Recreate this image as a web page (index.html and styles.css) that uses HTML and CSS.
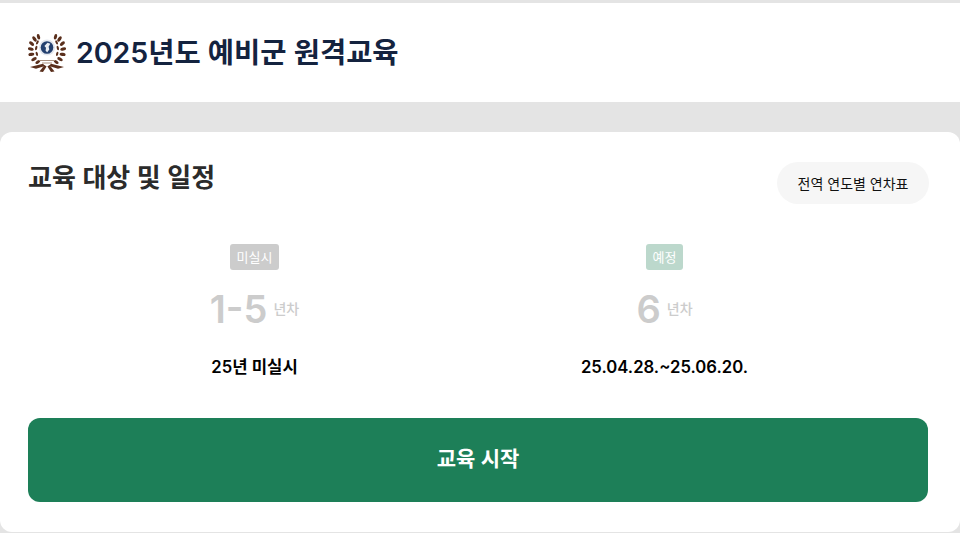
FILE: index.html
```html
<!DOCTYPE html>
<html lang="ko">
<head>
<meta charset="utf-8">
<title>2025년도 예비군 원격교육</title>
<link rel="stylesheet" href="styles.css">
</head>
<body>
<header class="top">
  <svg class="emblem" viewBox="0 0 38 38" aria-hidden="true">
    <g id="half" fill="#5a2f1c">
      <ellipse cx="10.5" cy="2.8" rx="1.5" ry="2.8" transform="rotate(-15 10.5 2.8)"/>
      <ellipse cx="6.5" cy="5" rx="1.6" ry="3" transform="rotate(-35 6.5 5)"/>
      <ellipse cx="3.6" cy="9.6" rx="1.6" ry="3" transform="rotate(-50 3.6 9.6)"/>
      <ellipse cx="2.8" cy="15" rx="1.6" ry="3" transform="rotate(-75 2.8 15)"/>
      <ellipse cx="3.4" cy="20.4" rx="1.6" ry="3" transform="rotate(-100 3.4 20.4)"/>
      <ellipse cx="6" cy="25.2" rx="1.6" ry="3" transform="rotate(-118 6 25.2)"/>
      <ellipse cx="9.8" cy="28" rx="1.4" ry="2.8" transform="rotate(-125 9.8 28)"/>
      <ellipse cx="9.4" cy="8.4" rx="1.1" ry="2.2" transform="rotate(25 9.4 8.4)"/>
      <ellipse cx="8.2" cy="14" rx="1.1" ry="2.2" transform="rotate(15 8.2 14)"/>
      <ellipse cx="8.8" cy="19.8" rx="1.1" ry="2.2" transform="rotate(-15 8.8 19.8)"/>
      <path d="M2 33 L15 29.8 L17 32 L8 34.8 Z"/>
      <path d="M11.5 37.6 L16.5 31 L18.6 32.4 L15 38 Z"/>
    </g>
    <g fill="#5a2f1c" transform="matrix(-1 0 0 1 38 0)">
      <ellipse cx="10.5" cy="2.8" rx="1.5" ry="2.8" transform="rotate(-15 10.5 2.8)"/>
      <ellipse cx="6.5" cy="5" rx="1.6" ry="3" transform="rotate(-35 6.5 5)"/>
      <ellipse cx="3.6" cy="9.6" rx="1.6" ry="3" transform="rotate(-50 3.6 9.6)"/>
      <ellipse cx="2.8" cy="15" rx="1.6" ry="3" transform="rotate(-75 2.8 15)"/>
      <ellipse cx="3.4" cy="20.4" rx="1.6" ry="3" transform="rotate(-100 3.4 20.4)"/>
      <ellipse cx="6" cy="25.2" rx="1.6" ry="3" transform="rotate(-118 6 25.2)"/>
      <ellipse cx="9.8" cy="28" rx="1.4" ry="2.8" transform="rotate(-125 9.8 28)"/>
      <ellipse cx="9.4" cy="8.4" rx="1.1" ry="2.2" transform="rotate(25 9.4 8.4)"/>
      <ellipse cx="8.2" cy="14" rx="1.1" ry="2.2" transform="rotate(15 8.2 14)"/>
      <ellipse cx="8.8" cy="19.8" rx="1.1" ry="2.2" transform="rotate(-15 8.8 19.8)"/>
      <path d="M2 33 L15 29.8 L17 32 L8 34.8 Z"/>
      <path d="M11.5 37.6 L16.5 31 L18.6 32.4 L15 38 Z"/>
    </g>
    <path d="M11 26.5 L27 26.5 M14 29 L24 29" fill="none" stroke="#a98f7d" stroke-width="1"/>
    <circle cx="19" cy="13.5" r="8" fill="#e3e7ee"/>
    <circle cx="19" cy="13.5" r="6.3" fill="#23406f"/>
    <path d="M19.5 8.8 L22.3 9.8 L20.6 12.8 L21.3 15.4 L19.2 18.2 L17.6 16.8 L18 13.8 L16.4 12 Z" fill="#e9edf3"/>
  </svg>
  <h1 class="title">2025년도 예비군 원격교육</h1>
</header>
<main class="card">
  <div class="card-head">
    <h2 class="subtitle">교육 대상 및 일정</h2>
    <button class="pill" type="button">전역 연도별 연차표</button>
  </div>
  <div class="groups">
    <section class="group">
      <span class="badge badge-gray">미실시</span>
      <div class="years"><strong class="num">1-5</strong><span class="unit">년차</span></div>
      <p class="date">25년 미실시</p>
    </section>
    <section class="group">
      <span class="badge badge-green">예정</span>
      <div class="years"><strong class="num">6</strong><span class="unit">년차</span></div>
      <p class="date">25.04.28.~25.06.20.</p>
    </section>
  </div>
  <button class="start" type="button">교육 시작</button>
</main>
</body>
</html>
```
FILE: styles.css
```css
* { box-sizing: border-box; }
html, body { margin: 0; height: 100%; }
body {
  background: #e4e4e4;
  font-family: Inter, "Noto Sans CJK KR", sans-serif;
  padding-top: 3px;
  height: 533px;
  overflow: hidden;
}
.top {
  height: 99px;
  background: #fff;
  display: flex;
  align-items: center;
  gap: 10px;
  padding: 0 28px 0;
}
.emblem { width: 38px; height: 38px; flex: none; }
.title {
  margin: 0;
  font-size: 28.5px;
  line-height: 40px;
  font-weight: 600;
  color: #14233f;
}
.card {
  margin-top: 30px;
  height: 400px;
  background: #fff;
  border-radius: 12px;
  padding: 30px 32px 30px 28px;
  display: flex;
  flex-direction: column;
}
.card-head {
  display: flex;
  justify-content: space-between;
  align-items: flex-start;
}
.subtitle {
  margin: 0;
  font-size: 26px;
  line-height: 32px;
  font-weight: 600;
  color: #2b2b2b;
}
.pill {
  border: 0;
  height: 42px;
  padding: 0 20.5px;
  margin-right: -1px;
  border-radius: 21px;
  background: #f6f6f6;
  color: #111;
  font: 400 14px Inter, "Noto Sans CJK KR", sans-serif;
}
.groups {
  display: grid;
  grid-template-columns: 453px 367px;
  margin-top: 40px;
}
.group {
  display: flex;
  flex-direction: column;
  align-items: center;
}
.badge {
  height: 26px;
  padding: 0 6.5px;
  border-radius: 3px;
  color: #fff;
  font-size: 13px;
  line-height: 26px;
  font-weight: 400;
}
.badge-gray { background: #cccccc; }
.badge-green { background: #bcd8cc; }
.years {
  display: flex;
  align-items: center;
  gap: 6px;
  height: 50px;
  margin-top: 14px;
  color: #cccccc;
}
.num { font-size: 38px; line-height: 50px; font-weight: 600; }
.unit { font-size: 14px; font-weight: 500; margin-top: -2px; }
.date {
  margin: 22px 0 0;
  font-size: 16.7px;
  line-height: 22px;
  font-weight: 600;
  color: #000;
}
.start {
  border: 0;
  height: 84px;
  margin-top: auto;
  border-radius: 12px;
  background: #1d7f58;
  color: #fff;
  font: 600 21px Inter, "Noto Sans CJK KR", sans-serif;
  padding-bottom: 7px;
}
```
